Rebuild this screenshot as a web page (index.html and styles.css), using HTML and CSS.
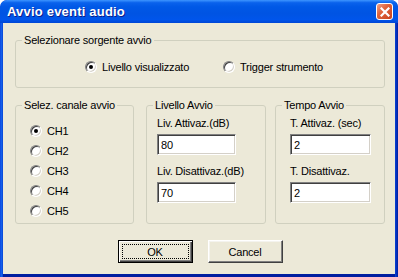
FILE: index.html
```html
<!DOCTYPE html>
<html lang="it">
<head>
    <meta charset="UTF-8">
    <title>Avvio eventi audio</title>
    <link rel="stylesheet" href="styles.css">
</head>
<body>
    <!-- Dialog window -->
    <div class="window">
        <div class="titlebar">
            <span class="title">Avvio eventi audio</span>
            <span class="close-btn">
                <svg width="10" height="10" viewBox="0 0 10 10">
                    <path d="M1.5 1.5 L8.5 8.5 M8.5 1.5 L1.5 8.5" stroke="#fff" stroke-width="2.2" stroke-linecap="square"/>
                </svg>
            </span>
        </div>

        <div class="client">
            <!-- Source selection -->
            <fieldset class="group group-source">
                <legend>Selezionare sorgente avvio</legend>
                <div class="source-row">
                    <label class="radio-opt src-opt"><span class="radio checked"></span>Livello visualizzato</label>
                    <label class="radio-opt"><span class="radio"></span>Trigger strumento</label>
                </div>
            </fieldset>

            <div class="groups-row">
                <!-- Channel -->
                <fieldset class="group group-channel">
                    <legend>Selez. canale avvio</legend>
                    <div class="channel-list">
                        <label class="radio-opt"><span class="radio checked"></span>CH1</label>
                        <label class="radio-opt"><span class="radio"></span>CH2</label>
                        <label class="radio-opt"><span class="radio"></span>CH3</label>
                        <label class="radio-opt"><span class="radio"></span>CH4</label>
                        <label class="radio-opt"><span class="radio"></span>CH5</label>
                    </div>
                </fieldset>

                <!-- Level -->
                <fieldset class="group group-level">
                    <legend>Livello Avvio</legend>
                    <div class="group-body">
                        <div class="field">
                            <span class="field-label">Liv. Attivaz.(dB)</span>
                            <span class="edit">80</span>
                        </div>
                        <div class="field">
                            <span class="field-label">Liv. Disattivaz.(dB)</span>
                            <span class="edit">70</span>
                        </div>
                    </div>
                </fieldset>

                <!-- Time -->
                <fieldset class="group group-time">
                    <legend>Tempo Avvio</legend>
                    <div class="group-body">
                        <div class="field">
                            <span class="field-label">T. Attivaz. (sec)</span>
                            <span class="edit">2</span>
                        </div>
                        <div class="field">
                            <span class="field-label">T. Disattivaz.</span>
                            <span class="edit">2</span>
                        </div>
                    </div>
                </fieldset>
            </div>

            <div class="buttons">
                <button class="btn btn-default"><span class="focus">OK</span></button>
                <button class="btn">Cancel</button>
            </div>
        </div>
    </div>
</body>
</html>
```

FILE: styles.css
```css
/* Base */
html, body {
    margin: 0;
    padding: 0;
    background: #ffffff;
}

body {
    font-family: 'Liberation Sans', Arial, sans-serif;
    font-size: 11px;
    letter-spacing: -0.2px;
    color: #000;
}

/* Window frame */
.window {
    width: 398px;
    height: 277px;
    box-sizing: border-box;
    background: linear-gradient(to right, #0831D9 0, #166AEE 1px, #0842D6 3px, #0842D6 395px, #001EA0 398px);
    border-radius: 7px 7px 0 0;
    display: flex;
    flex-direction: column;
    overflow: hidden;
}

.titlebar {
    height: 23px;
    flex-shrink: 0;
    display: flex;
    align-items: center;
    justify-content: space-between;
    padding: 0 5px 0 7px;
    background: linear-gradient(to bottom, #3D95FF 0%, #0A62EC 12%, #0058E6 30%, #0054E3 60%, #0055EB 85%, #0046D5 100%);
    border-radius: 7px 7px 0 0;
}

.title {
    color: #fff;
    font-weight: bold;
    font-size: 13px;
    text-shadow: 1px 1px #0A1E8C;
    letter-spacing: 0.2px;
}

.close-btn {
    width: 15px;
    height: 15px;
    border: 1px solid #fff;
    border-radius: 3px;
    background: linear-gradient(135deg, #F0A08A 0%, #E0643C 40%, #C8421E 100%);
    display: flex;
    align-items: center;
    justify-content: center;
}

.client {
    flex: 1;
    margin: 0 3px 3px 3px;
    background: #ECE9D8;
    padding: 11px 10px 0 12px;
    display: flex;
    flex-direction: column;
    box-shadow: 0 3px 0 #001EA0;
}

/* Group boxes */
.group {
    margin: 0;
    padding: 0;
    border: 1px solid #D0D0BF;
    border-radius: 3px;
    box-sizing: border-box;
}

.group legend {
    margin-left: 6px;
    padding: 0 2px;
    line-height: 13px;
}

.group-source {
    height: 54px;
}

.source-row {
    display: flex;
    align-items: center;
    padding-left: 69px;
    margin-top: 13px;
}

.src-opt {
    width: 138px;
}

.groups-row {
    display: flex;
    margin-top: 11px;
    height: 125px;
}

.group-channel {
    width: 119px;
}

.group-level {
    width: 120px;
    margin-left: 12px;
}

.group-level .group-body {
    padding-left: 10px;
}

.group-time {
    width: 110px;
    margin-left: 9px;
}

.group-time .group-body {
    padding-left: 14px;
}

.channel-list {
    display: flex;
    flex-direction: column;
    gap: 7px;
    padding: 12px 0 0 14px;
}

/* Radio buttons */
.radio-opt {
    display: flex;
    align-items: center;
    height: 13px;
    white-space: nowrap;
}

.radio {
    position: relative;
    width: 10px;
    height: 10px;
    border-radius: 50%;
    border: 1px solid;
    border-color: #808080 #ffffff #ffffff #808080;
    box-shadow: inset 1px 1px 0 #404040, inset -1px -1px 0 #D4D0C8;
    background: #fff;
    margin-right: 5px;
    flex-shrink: 0;
}

.radio.checked::after {
    content: "";
    position: absolute;
    left: 3px;
    top: 3px;
    width: 4px;
    height: 4px;
    border-radius: 50%;
    background: #000;
}

/* Edit fields */
.field {
    display: flex;
    flex-direction: column;
    margin-top: 5px;
}

.field + .field {
    margin-top: 10px;
}

.field-label {
    line-height: 13px;
    margin-bottom: 4px;
    white-space: nowrap;
}

.edit {
    width: 79px;
    height: 21px;
    box-sizing: border-box;
    background: #fff;
    border: 1px solid;
    border-color: #808080 #ffffff #ffffff #808080;
    box-shadow: inset 1px 1px 0 #404040, inset -1px -1px 0 #D4D0C8;
    padding: 3px 0 0 3px;
    line-height: 14px;
}

.group-time .edit {
    width: 81px;
}

/* Buttons */
.buttons {
    display: flex;
    justify-content: center;
    gap: 15px;
    margin-top: 16px;
}

.btn {
    width: 75px;
    height: 23px;
    box-sizing: border-box;
    font-family: inherit;
    font-size: 11px;
    letter-spacing: inherit;
    color: #000;
    background: #ECE9D8;
    border: 1px solid;
    border-color: #ffffff #404040 #404040 #ffffff;
    box-shadow: inset -1px -1px 0 #808080, inset 1px 1px 0 #F4F3EE;
    padding: 0;
}

.btn-default {
    border: 1px solid #000;
    box-shadow: inset 1px 1px 0 #ffffff, inset -1px -1px 0 #404040, inset -2px -2px 0 #808080;
    padding: 3px;
}

.focus {
    display: flex;
    align-items: center;
    justify-content: center;
    height: 100%;
    border: 1px dotted #000;
    box-sizing: border-box;
}
```
